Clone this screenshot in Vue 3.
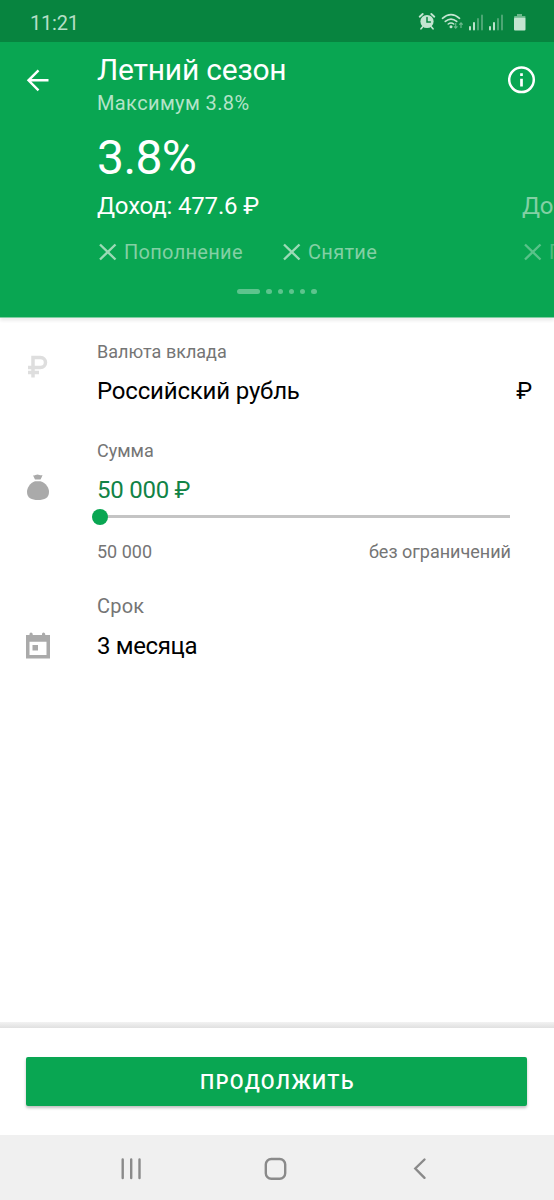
<script setup>
const title = 'Летний сезон'
const dots = [1, 2, 3, 4, 5]
</script>

<template>
  <div class="screen">
    <div class="status">
      <span class="time">11:21</span>
      <svg class="status-icons" width="110" height="20" viewBox="0 0 110 20">
        <g fill="none" stroke="#c3e5d1" stroke-linecap="round">
          <circle cx="9" cy="9.5" r="6.6" stroke="none" fill="#c3e5d1" />
          <path d="M1.7 4.7L4.7 2M16.3 4.7L13.3 2" stroke-width="1.9" />
          <path d="M4.5 15L3 16.8M13.5 15L15 16.8" stroke-width="1.7" />
          <path d="M9 5.5V10H12.4" stroke="#07843f" stroke-width="1.5" />
          <path d="M24.5 6.3Q33 -1 41.5 6.3" stroke-width="1.7" />
          <path d="M27.3 9.4Q33 4.7 38.7 9.4" stroke-width="1.7" />
          <path d="M30.2 12Q33 9.8 35.8 12" stroke-width="1.5" />
        </g>
        <circle cx="33" cy="14.7" r="1.5" fill="#c3e5d1" />
        <path d="M37.7 11V16M36 14.3L37.7 16.2L39.4 14.3M43 16V11M41.3 12.7L43 10.8L44.7 12.7" fill="none" stroke="#6bb98c" stroke-width="1.2" />
        <g v-for="x in [51, 71]" :key="x">
          <path :d="`M${x + 1} 15V17.5M${x + 5} 11V17.5`" stroke="#c3e5d1" stroke-width="1.9" stroke-linecap="round" />
          <path :d="`M${x + 9} 7V17.5M${x + 13} 3.5V17.5`" stroke="#55aa7a" stroke-width="1.8" stroke-linecap="round" />
        </g>
        <path d="M99 2H104V4H107Q107.500 4 107.500 5V6.500H96V5Q96 4 97 4H99Z" fill="#6bb98c" />
        <rect x="96" y="5.7" width="11.5" height="12.8" rx="1" fill="#c3e5d1" />
      </svg>
    </div>

    <header class="header">
      <svg class="back" width="24" height="24" viewBox="0 0 24 24" fill="none" stroke="#fff" stroke-width="2.4">
        <path d="M23.500 12.300H3.500M13.500 2.300L3.500 12.300L13.500 22.300" />
      </svg>
      <div class="heading">
        <div class="title">{{ title }}</div>
        <div class="subtitle">Максимум 3.8%</div>
        <div class="rate">3.8%</div>
        <div class="income"><span class="income-text">Доход: 477.6 ₽</span><span class="next">До</span></div>
        <div class="options">
          <span class="option first">
            <svg width="20" height="20" viewBox="0 0 20 20"><path d="M3 2.500L18.500 17.500M18.500 2.500L3 17.500" /></svg>
            <span>Пополнение</span>
          </span>
          <span class="option second">
            <svg width="20" height="20" viewBox="0 0 20 20"><path d="M3 2.500L18.500 17.500M18.500 2.500L3 17.500" /></svg>
            <span>Снятие</span>
          </span>
          <span class="option faded">
            <svg width="20" height="20" viewBox="0 0 20 20"><path d="M3 2.500L18.500 17.500M18.500 2.500L3 17.500" /></svg>
            <span>Пополнение</span>
          </span>
        </div>
      </div>
      <svg class="info" width="28" height="28" viewBox="0 0 28 28">
        <circle cx="13.500" cy="13.800" r="12.300" fill="none" stroke="#fff" stroke-width="2.5" />
        <path d="M13.500 12.700V20.500M13.500 7.300V10" stroke="#fff" stroke-width="2.7" />
      </svg>
      <div class="pager"><i class="active"></i><i v-for="d in dots" :key="d"></i></div>
    </header>

    <main class="form">
      <section class="row currency">
        <svg class="icon ruble" width="22" height="24" viewBox="0 0 22 24" fill="none" stroke="#dedede" stroke-width="3.5">
          <path d="M6 22.500V2.500H13.500A4.700 4.700 0 0 1 13.500 12.500H1M1 17.500H12" />
        </svg>
        <div class="body">
          <div class="label">Валюта вклада</div>
          <div class="value v1"><span class="v1-text">Российский рубль</span><span class="sign">₽</span></div>
        </div>
      </section>
      <section class="row amount">
        <svg class="icon bag" width="24" height="28" viewBox="0 0 24 28" fill="#aaa">
          <path d="M7 2.200Q8.500 2.700 9.500 2Q11.500 1 13.500 2Q15 2.700 16.500 2Q15.800 4.500 14.500 6.500H9Q8 4.500 7 2.200Z" />
          <path d="M9 8.200H14.500C20 10 23 14.500 23 19C23 25 18.500 27 12 27S1 25 1 19C1 14.500 4 10 9 8.200Z" />
        </svg>
        <div class="body">
          <div class="label">Сумма</div>
          <div class="value v2">50 000 ₽</div>
          <div class="slider"><span class="thumb"></span></div>
          <div class="limits"><span>50 000</span><span>без ограничений</span></div>
        </div>
      </section>
      <section class="row term">
        <svg class="icon calendar" width="26" height="28" viewBox="0 0 26 28">
          <path fill="#aaa" fill-rule="evenodd" d="M1 4H4.500V3Q4.500 1.500 6 1.500T7.700 3V4H17V3Q17 1.500 18.500 1.500T20.200 3V4H25V27.500H1ZM4.500 10.800V24H21.500V10.800ZM7.500 14H13V19.500H7.500Z" />
        </svg>
        <div class="body">
          <div class="label l3">Срок</div>
          <div class="value v3">3 месяца</div>
        </div>
      </section>
    </main>

    <footer class="footer">
      <button class="submit">ПРОДОЛЖИТЬ</button>
    </footer>
    <nav class="nav">
      <svg width="554" height="65" viewBox="0 0 554 65" fill="none" stroke="#8a8a8a" stroke-width="2.4" stroke-linecap="round">
        <path d="M122.700 24.500V43M131.200 24.500V43M139.500 24.500V43" />
        <rect x="265.8" y="24" width="19.4" height="19.8" rx="5.5" />
        <path d="M424.500 24.500L415.300 33.500L424.500 42.800" />
      </svg>
    </nav>
  </div>
</template>

<style>
body { margin: 0; background: #fff; }
</style>

<style scoped>
.screen { width: 554px; height: 1200px; display: flex; flex-direction: column; overflow: hidden; background: #fff; font-family: Roboto, "Noto Sans", sans-serif; white-space: nowrap; }
.status { height: 42px; flex: none; background: #07843f; display: flex; justify-content: space-between; box-sizing: border-box; padding: 11px 26px 0 30px; }
.time { font-size: 20px; line-height: 24px; color: #b5dfc6; letter-spacing: -0.2px; }
.status-icons { margin-top: 1px; }
.header { height: 276px; flex: none; box-sizing: border-box; border-bottom: 1px solid #7fcfa2; background: #09a652; color: #fff; display: grid; grid-template-columns: 97px 1fr 46px; grid-template-rows: 237px 1fr; box-shadow: 0 3px 3px rgba(0,0,0,.07); }
.back { margin: 26px 0 0 25px; }
.heading { padding-top: 10px; min-width: 0; }
.info { margin-top: 24px; }
.title { font-size: 30px; line-height: 36px; letter-spacing: -.22px; }
.subtitle { margin-top: 3px; font-size: 20px; line-height: 24px; color: #b4e3c8; letter-spacing: .38px; }
.rate { margin-top: 15px; font-size: 48px; line-height: 56px; letter-spacing: -.6px; }
.income { margin-top: 4px; font-size: 24px; line-height: 32px; display: flex; letter-spacing: -.18px; }
.income-text { width: 425px; flex: none; }
.next { color: #83d0a4; }
.options { margin-top: 18px; font-size: 20px; line-height: 24px; display: flex; color: #83d0a4; letter-spacing: .3px; }
.option { display: flex; flex: none; gap: 7px; }
.option svg { margin-top: 2px; fill: none; stroke: #9cdab6; stroke-width: 2.4; }
.first { width: 184px; }
.second { width: 241px; }
.faded { opacity: .55; }
.pager { grid-column: 1 / 4; display: flex; justify-content: center; gap: 6px; padding-top: 10px; }
.pager i { width: 5.3px; height: 5.3px; border-radius: 3px; background: #5dc48d; }
.pager .active { width: 23px; }
.form { flex: 1; }
.row { display: grid; grid-template-columns: 97px 1fr; }
.label { font-size: 18px; line-height: 24px; color: #757575; }
.value { font-size: 24px; line-height: 32px; color: #000; letter-spacing: -.18px; }
.currency { padding-top: 22px; }
.ruble { margin: 15px 0 0 27px; }
.v1 { margin-top: 11px; display: flex; justify-content: space-between; padding-right: 22px; }
.amount { padding-top: 32px; }
.bag { margin: 34px 0 0 26px; }
.v2 { margin-top: 11px; color: #118346; letter-spacing: -.25px; }
.slider { margin: 9px 0 0 2px; width: 411px; height: 3px; background: #c4c4c4; display: flex; align-items: center; }
.thumb { width: 16px; height: 16px; flex: none; border-radius: 50%; background: #09a652; margin-left: -7px; }
.limits { margin-top: 22px; width: 414px; display: flex; justify-content: space-between; font-size: 18px; line-height: 24px; color: #757575; }
.term { padding-top: 30px; }
.calendar { margin: 37px 0 0 25px; }
.l3 { font-size: 20px; letter-spacing: .2px; }
.v3 { margin-top: 12px; letter-spacing: -.35px; }
.footer { height: 113px; flex: none; box-sizing: border-box; padding: 35px 27px 0 26px; background: linear-gradient(#f2f2f2, #e0e0e0 6px, #fff 6px); }
.submit { display: block; width: 100%; height: 49px; padding: 1px 0 0 2px; border: 0; border-radius: 2px; background: #09a652; color: #fff; font: 500 20px/48px Roboto, sans-serif; letter-spacing: 1.4px; box-shadow: 0 2px 3px rgba(0,0,0,.25); }
.nav { height: 65px; flex: none; background: #f0f0f0; }
.nav svg { display: block; }
</style>
